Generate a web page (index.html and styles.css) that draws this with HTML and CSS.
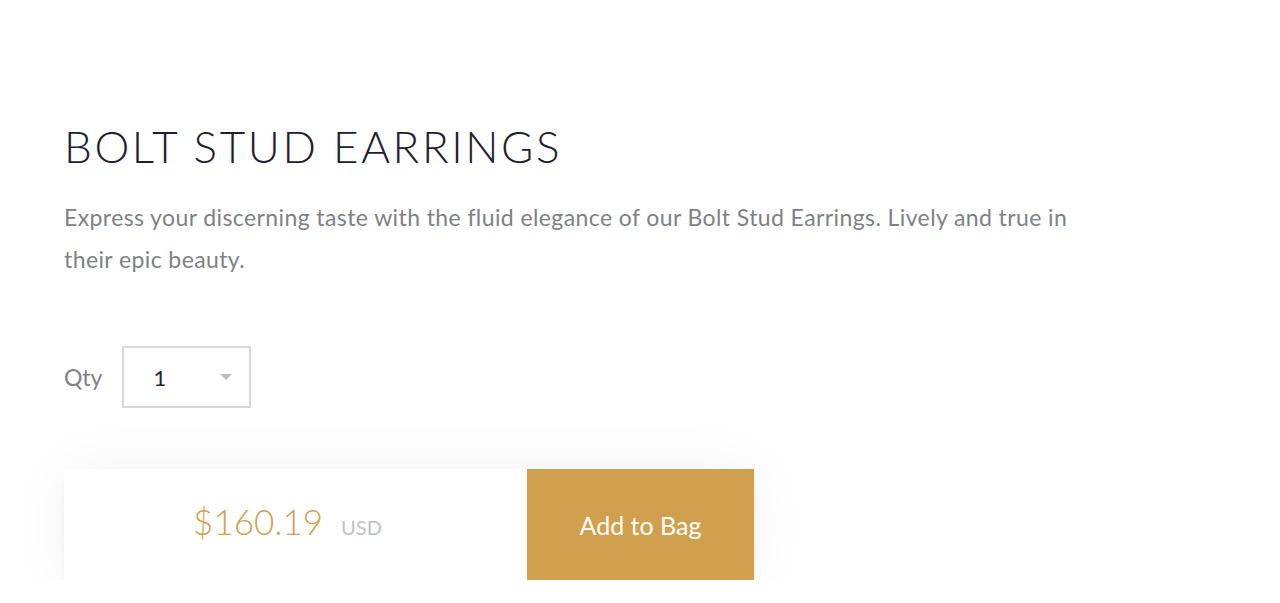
FILE: index.html
```html
<!DOCTYPE html>
<html lang="en">
<head>
    <meta charset="UTF-8">
    <meta name="viewport" content="width=device-width, initial-scale=1.0">
    <title>Bolt Stud Earrings</title>
    <link rel="stylesheet" href="styles.css">
</head>
<body>

    <!-- Product Details -->
    <div class="product">
        <h1 class="product-title">BOLT STUD EARRINGS</h1>
        <p class="product-desc">Express your discerning taste with the fluid elegance of our Bolt Stud Earrings. Lively and true in their epic beauty.</p>

        <!-- Quantity -->
        <div class="qty-row">
            <span class="qty-label">Qty</span>
            <div class="qty-select">
                <span class="qty-value">1</span>
                <span class="qty-arrow"></span>
            </div>
        </div>

        <!-- Price + Add to Bag -->
        <div class="buy-card">
            <div class="price-box">
                <span class="price">$160.19</span>
                <span class="currency">USD</span>
            </div>
            <button class="add-btn">Add to Bag</button>
        </div>
    </div>

</body>
</html>
```

FILE: styles.css
```css
/* General Reset */
* {
    margin: 0;
    padding: 0;
    box-sizing: border-box;
}

body {
    font-family: 'Lato', 'Liberation Sans', sans-serif;
    background-color: #ffffff;
    color: #22232f;
    overflow: hidden;
}

/* Product Container */
.product {
    padding: 118px 64px 0 64px;
}

.product-title {
    font-size: 44px;
    font-weight: 300;
    letter-spacing: 2.6px;
    line-height: 56px;
    color: #1e2030;
}

.product-desc {
    margin-top: 22px;
    max-width: 1040px;
    font-size: 23px;
    letter-spacing: 0.4px;
    line-height: 42px;
    color: #7d8285;
}

/* Quantity */
.qty-row {
    display: flex;
    align-items: center;
    gap: 20px;
    margin-top: 66px;
}

.qty-label {
    font-size: 23px;
    color: #7d8285;
}

.qty-select {
    display: flex;
    align-items: center;
    justify-content: space-between;
    width: 129px;
    height: 62px;
    padding: 0 17px 0 29px;
    border: 2px solid #d6d8da;
}

.qty-value {
    font-size: 22px;
    color: #22232f;
}

.qty-arrow {
    width: 0;
    height: 0;
    border-left: 6px solid transparent;
    border-right: 6px solid transparent;
    border-top: 6px solid #b9bcbf;
}

/* Buy Card */
.buy-card {
    display: flex;
    width: 690px;
    height: 111px;
    margin-top: 61px;
    box-shadow: 0 9px 10px -4px rgba(0, 0, 0, 0.12), 0 0 60px rgba(0, 0, 0, 0.05);
}

.price-box {
    flex: 1;
    display: flex;
    align-items: baseline;
    justify-content: center;
    gap: 18px;
    padding: 31px 16px 0 0;
    background-color: #ffffff;
}

.price {
    font-size: 35px;
    font-weight: 300;
    color: #d2a04f;
}

.currency {
    font-size: 20px;
    color: #bfc2c5;
}

.add-btn {
    width: 227px;
    border: none;
    background-color: #d1a04e;
    color: #ffffff;
    font-family: inherit;
    font-size: 25px;
    cursor: pointer;
}
```
